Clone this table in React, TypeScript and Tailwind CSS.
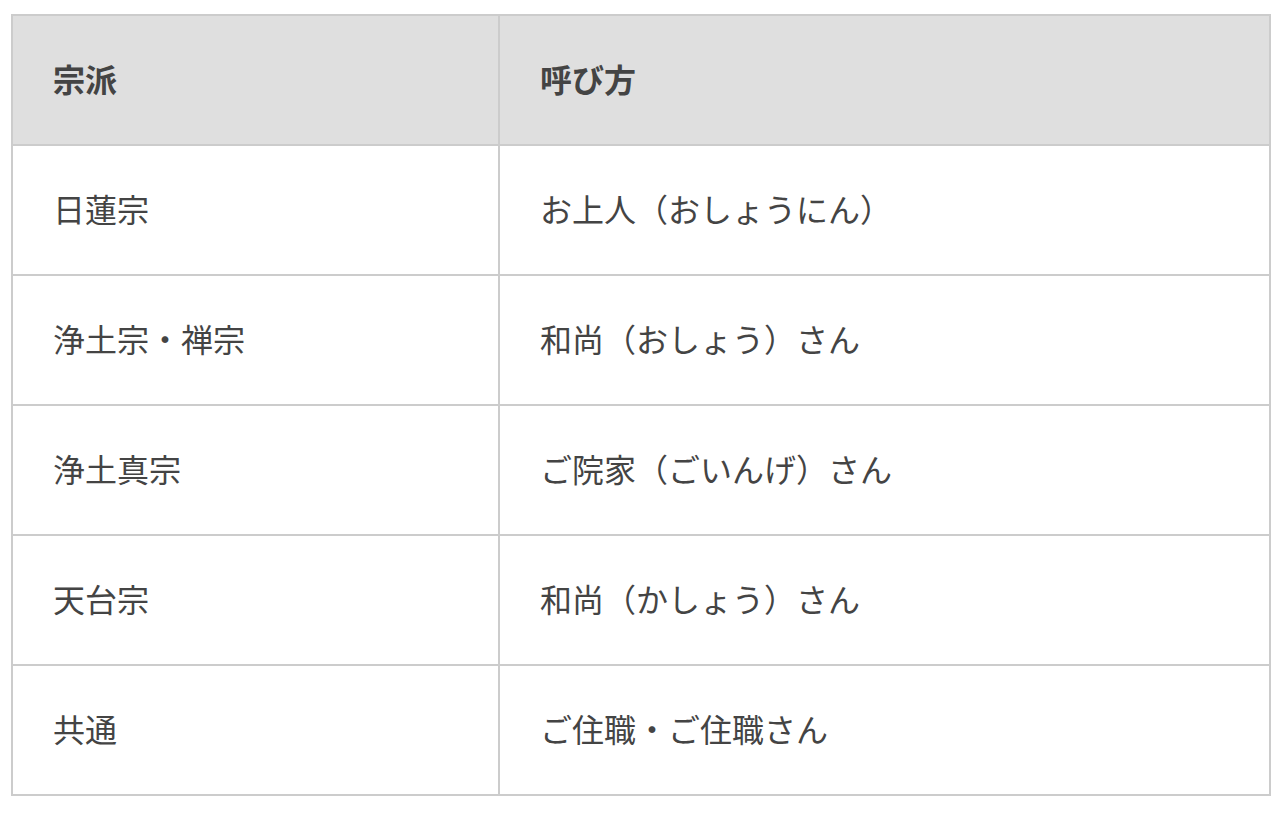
import React from "react";

const rows: [string, string][] = [
  ["日蓮宗", "お上人（おしょうにん）"],
  ["浄土宗・禅宗", "和尚（おしょう）さん"],
  ["浄土真宗", "ご院家（ごいんげ）さん"],
  ["天台宗", "和尚（かしょう）さん"],
  ["共通", "ご住職・ご住職さん"],
];

export default function App() {
  return (
    <div
      className="w-[1286px] h-[816px] bg-white pl-[11px] pt-[14px]"
      style={{ fontFamily: '"Noto Sans CJK JP", "Noto Sans", sans-serif' }}
    >
      <div className="w-[1260px] border-2 border-[#cccccc] flex flex-col text-[32px] leading-[40px] text-[#444444]">
        <div className="flex h-[128px] bg-[#dfdfdf] font-bold">
          <div className="w-[485px] flex items-center pl-[40px] pb-[4px]">宗派</div>
          <div className="w-[2px] bg-[#cccccc]" />
          <div className="flex-1 flex items-center pl-[40px] pb-[4px]">呼び方</div>
        </div>
        {rows.map(([a, b]) => (
          <div key={a} className="flex h-[130px] border-t-2 border-[#cccccc]">
            <div className="w-[485px] flex items-center pl-[40px] pb-[4px]">{a}</div>
            <div className="w-[2px] bg-[#cccccc]" />
            <div className="flex-1 flex items-center pl-[40px] pb-[4px]">{b}</div>
          </div>
        ))}
      </div>
    </div>
  );
}
